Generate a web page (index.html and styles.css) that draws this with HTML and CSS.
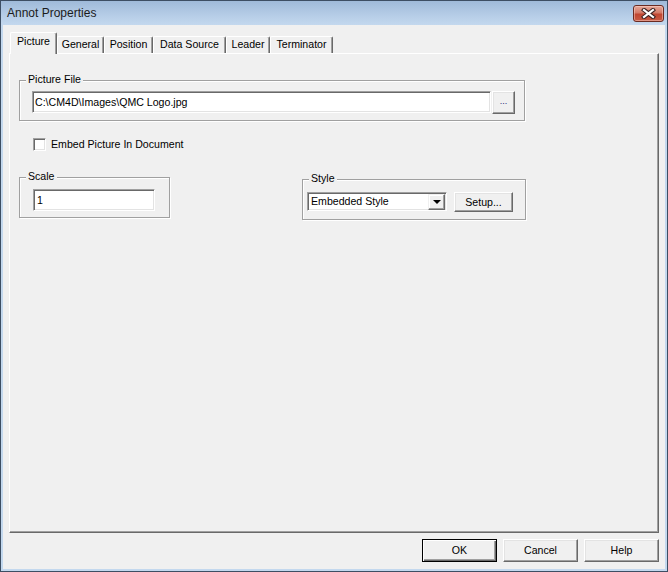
FILE: index.html
```html
<!DOCTYPE html>
<html>
<head>
<meta charset="utf-8">
<link rel="stylesheet" href="styles.css">
</head>
<body>
<div class="window">
  <div class="titlebar">
    <span class="title">Annot Properties</span>
    <div class="close">
      <svg width="15" height="11" viewBox="0 0 15 11">
        <path d="M3 2 L12 9 M12 2 L3 9" stroke="#3a2020" stroke-width="4.2" stroke-linecap="square" fill="none"/>
        <path d="M3 2 L12 9 M12 2 L3 9" stroke="#ffffff" stroke-width="2.2" stroke-linecap="square" fill="none"/>
      </svg>
    </div>
  </div>
  <div class="client">
    <div class="tabs">
      <div class="tab sel w-picture">Picture</div>
      <div class="tab w-general">General</div>
      <div class="tab w-position">Position</div>
      <div class="tab w-datasource">Data Source</div>
      <div class="tab w-leader">Leader</div>
      <div class="tab w-terminator">Terminator</div>
    </div>
    <div class="panel">
      <div class="group g-file">
        <span class="glabel">Picture File</span>
        <div class="row">
          <div class="edit e-file">C:\CM4D\Images\QMC Logo.jpg</div>
          <div class="btn browse">...</div>
        </div>
      </div>
      <div class="checkrow">
        <div class="checkbox"></div>
        <span class="checklabel">Embed Picture In Document</span>
      </div>
      <div class="pair">
        <div class="group g-scale">
          <span class="glabel">Scale</span>
          <div class="edit e-scale">1</div>
        </div>
        <div class="group g-style">
          <span class="glabel">Style</span>
          <div class="row">
            <div class="combo">
              <span class="combotext">Embedded Style</span>
              <div class="dropbtn"><span class="arrow"></span></div>
            </div>
            <div class="btn setup">Setup...</div>
          </div>
        </div>
      </div>
    </div>
    <div class="footer">
      <div class="btn dlg default">OK</div>
      <div class="btn dlg">Cancel</div>
      <div class="btn dlg">Help</div>
    </div>
  </div>
</div>
</body>
</html>
```

FILE: styles.css
```css
* { box-sizing: border-box; }
html, body { margin: 0; padding: 0; }
body {
  width: 668px;
  height: 572px;
  overflow: hidden;
  font-family: "Liberation Sans", Arial, sans-serif;
  font-size: 10.6px;
  color: #000;
}
.window {
  width: 668px;
  height: 572px;
  border: 1px solid #3d4e63;
  background: #c3d8ee;
  display: flex;
  flex-direction: column;
}
.titlebar {
  height: 24px;
  flex: none;
  display: flex;
  align-items: flex-start;
  justify-content: space-between;
  background: linear-gradient(#9fbad9, #b6cde7 60%, #c3d8ee);
}
.title {
  font-size: 12px;
  color: #1b1b1b;
  margin: 5px 0 0 6px;
  line-height: 14px;
}
.close {
  width: 31px;
  height: 17px;
  margin: 4px 3px 0 0;
  border: 1px solid #6a2b22;
  border-radius: 3px;
  background: linear-gradient(#e6a899, #d37a68 45%, #c04631 55%, #c85b45);
  box-shadow: inset 0 0 0 1px rgba(255,220,210,0.45);
  display: flex;
  align-items: center;
  justify-content: center;
}
.close svg { display: block; }
.client {
  flex: 1;
  margin: 0 2px 2px 2px;
  background: #f0f0f0;
  display: flex;
  flex-direction: column;
  padding: 7px 6px 0 6px;
}
.tabs {
  display: flex;
  align-items: flex-end;
  height: 22px;
  margin-bottom: -1px;
  padding-left: 1px;
  position: relative;
  z-index: 1;
}
.tab {
  height: 17px;
  margin-bottom: 1px;
  background: #f0f0f0;
  border-top: 1px solid #fff;
  border-left: 1px solid #fff;
  border-right: 1px solid #696969;
  box-shadow: inset -1px 0 #a0a0a0;
  border-radius: 2px 2px 0 0;
  text-align: center;
  line-height: 15px;
  white-space: nowrap;
}
.tab.sel {
  height: 22px;
  margin-bottom: 0;
  line-height: 17px;
  padding-bottom: 2px;
}
.w-picture { width: 47px; }
.w-general { width: 47px; }
.w-position { width: 49px; }
.w-datasource { width: 73px; }
.w-leader { width: 44px; }
.w-terminator { width: 63px; }
.panel {
  width: 650px;
  height: 480px;
  flex: none;
  border-top: 1px solid #fff;
  border-left: 1px solid #fff;
  border-right: 1px solid #696969;
  border-bottom: 1px solid #696969;
  box-shadow: inset -1px -1px #a0a0a0;
  background: #f0f0f0;
  display: flex;
  flex-direction: column;
  align-items: flex-start;
}
.group {
  position: relative;
  border: 1px solid #a0a0a0;
  box-shadow: inset 1px 1px #fff, 1px 1px #fff;
}
.glabel {
  position: absolute;
  top: -8px;
  left: 6px;
  padding: 0 2px;
  background: #f0f0f0;
  line-height: 13px;
  white-space: nowrap;
}
.row { display: flex; align-items: flex-start; }
.g-file {
  margin: 26px 0 0 9px;
  width: 506px;
  height: 41px;
  padding: 10px 0 0 12px;
}
.edit {
  height: 22px;
  background: #fff;
  border: 1px solid;
  border-color: #a0a0a0 #fff #fff #a0a0a0;
  box-shadow: inset 1px 1px #696969, inset -1px -1px #e3e3e3;
  padding-left: 2px;
  line-height: 20px;
  white-space: nowrap;
}
.e-file { width: 459px; }
.btn {
  background: #f0f0f0;
  border: 1px solid;
  border-color: #fff #696969 #696969 #fff;
  box-shadow: inset -1px -1px #a0a0a0, inset 1px 1px #e3e3e3;
  text-align: center;
  white-space: nowrap;
}
.browse {
  width: 23px;
  height: 23px;
  margin-left: 1px;
  color: #1f1f7a;
  line-height: 19px;
  font-size: 9px;
}
.checkrow {
  display: flex;
  align-items: center;
  height: 13px;
  margin: 17px 0 0 23px;
}
.checkbox {
  width: 13px;
  height: 13px;
  background: #fff;
  border: 1px solid;
  border-color: #a0a0a0 #fff #fff #a0a0a0;
  box-shadow: inset 1px 1px #696969, inset -1px -1px #e3e3e3;
}
.checklabel { margin-left: 5px; line-height: 13px; }
.pair {
  display: flex;
  align-items: flex-start;
  margin: 26px 0 0 9px;
}
.g-scale {
  width: 151px;
  height: 41px;
  padding: 11px 0 0 13px;
}
.e-scale { width: 122px; padding-left: 3px; }
.g-style {
  width: 224px;
  height: 41px;
  margin: 2px 0 0 132px;
  padding: 12px 0 0 4px;
}
.combo {
  width: 140px;
  height: 19px;
  background: #fff;
  border: 1px solid;
  border-color: #a0a0a0 #fff #fff #a0a0a0;
  box-shadow: inset 1px 1px #696969, inset -1px -1px #e3e3e3;
  display: flex;
  align-items: center;
  justify-content: space-between;
  padding: 1px 1px 1px 3px;
}
.combotext { line-height: 15px; }
.dropbtn {
  width: 17px;
  height: 16px;
  background: #f0f0f0;
  border: 1px solid;
  border-color: #f0f0f0 #696969 #696969 #f0f0f0;
  box-shadow: inset -1px -1px #a0a0a0, inset 1px 1px #fff;
  display: flex;
  align-items: center;
  justify-content: center;
}
.arrow {
  width: 0;
  height: 0;
  border-left: 4px solid transparent;
  border-right: 4px solid transparent;
  border-top: 4px solid #000;
}
.setup {
  width: 59px;
  height: 20px;
  margin-left: 7px;
  line-height: 18px;
}
.footer {
  display: flex;
  justify-content: flex-end;
  gap: 6px;
  margin-top: 6px;
  padding-right: 0;
  width: 650px;
}
.dlg {
  width: 75px;
  height: 23px;
  line-height: 21px;
}
.dlg.default {
  border-color: #000;
  box-shadow: inset 1px 1px #fff, inset -1px -1px #696969, inset -2px -2px #a0a0a0;
}
```
